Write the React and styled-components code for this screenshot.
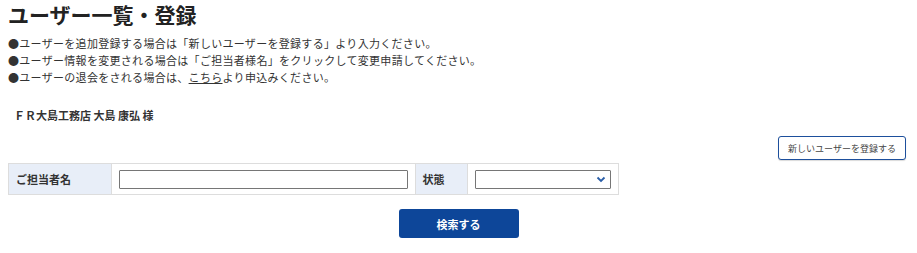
import React from 'react'
import styled, { createGlobalStyle } from 'styled-components'

const GlobalStyle = createGlobalStyle`
  body {
    margin: 0;
    background: #fff;
    font-family: "Noto Sans CJK JP", "Noto Sans", sans-serif;
    color: #333;
  }
`

const App = () => {
  return (
    <Container>
      <GlobalStyle />
      <Title>ユーザー一覧・登録</Title>
      <Notes>
        <li>●ユーザーを追加登録する場合は「新しいユーザーを登録する」より入力ください。</li>
        <li>●ユーザー情報を変更される場合は「ご担当者様名」をクリックして変更申請してください。</li>
        <li>●ユーザーの退会をされる場合は、<Link>こちら</Link>より申込みください。</li>
      </Notes>
      <Company>ＦＲ大島工務店 大島 康弘 様</Company>
      <ActionRow>
        <OutlineButton>新しいユーザーを登録する</OutlineButton>
      </ActionRow>
      <SearchTable>
        <tbody>
          <tr>
            <Label width={104}>ご担当者名</Label>
            <Field width={304}>
              <TextInput type="text" />
            </Field>
            <Label width={53}>状態</Label>
            <Field width={150}>
              <SelectWrap>
                <Select>
                  <option></option>
                </Select>
                <Chevron width="10" height="7" viewBox="0 0 10 7">
                  <path d="M1.5 1.5 L5 5 L8.5 1.5" fill="none" stroke="#2a5ea8" strokeWidth="1.8" />
                </Chevron>
              </SelectWrap>
            </Field>
          </tr>
        </tbody>
      </SearchTable>
      <SubmitRow>
        <PrimaryButton>検索する</PrimaryButton>
      </SubmitRow>
    </Container>
  )
}

export default App

const Container = styled.div`
  padding: 0 11px 0 8px;
`
const Title = styled.h1`
  margin: 0;
  font-size: 21px;
  line-height: 29px;
  font-weight: 700;
  color: #222;
`
const Notes = styled.ul`
  list-style: none;
  margin: 6px 0 0;
  padding: 0;
  font-size: 11px;
  line-height: 17px;
  letter-spacing: 0.3px;
  color: #333;
`
const Link = styled.span`
  text-decoration: underline;
`
const Company = styled.div`
  margin-top: 21px;
  padding-left: 6px;
  font-size: 11px;
  line-height: 17px;
  font-weight: 700;
  color: #333;
`
const ActionRow = styled.div`
  display: flex;
  justify-content: flex-end;
  margin-top: 12px;
`
const OutlineButton = styled.button`
  width: 128px;
  height: 24px;
  padding: 0;
  background: #fff;
  border: 1px solid #1d4f9c;
  border-radius: 3px;
  box-shadow: 0 1px 1px rgba(0, 0, 0, 0.15);
  font-family: inherit;
  font-size: 9px;
  color: #444;
`
const SearchTable = styled.table`
  margin-top: 3px;
  border-collapse: collapse;
  width: 611px;
  border: 1px solid #ddd;
`
const Label = styled.th`
  width: ${p => p.width}px;
  box-sizing: border-box;
  height: 31px;
  padding: 0 7px;
  background: #e8eef8;
  border: 1px solid #ddd;
  text-align: left;
  font-size: 11px;
  font-weight: 700;
  color: #333;
`
const Field = styled.td`
  width: ${p => p.width}px;
  box-sizing: border-box;
  padding: 0 7px;
  border: 1px solid #ddd;
`
const TextInput = styled.input`
  display: block;
  box-sizing: border-box;
  width: 289px;
  height: 19px;
  margin: 0;
  border: 1px solid #767676;
  border-radius: 1px;
`
const SelectWrap = styled.div`
  position: relative;
  width: 136px;
`
const Select = styled.select`
  display: block;
  box-sizing: border-box;
  width: 100%;
  height: 19px;
  margin: 0;
  appearance: none;
  background: #fff;
  border: 1px solid #767676;
  border-radius: 1px;
`
const Chevron = styled.svg`
  position: absolute;
  right: 5px;
  top: 6px;
  pointer-events: none;
`
const SubmitRow = styled.div`
  display: flex;
  justify-content: center;
  margin-top: 14px;
  padding-left: 3px;
`
const PrimaryButton = styled.button`
  width: 120px;
  height: 29px;
  padding: 0;
  background: #0d4699;
  border: none;
  border-radius: 3px;
  font-family: inherit;
  font-size: 11px;
  font-weight: 700;
  color: #fff;
`
